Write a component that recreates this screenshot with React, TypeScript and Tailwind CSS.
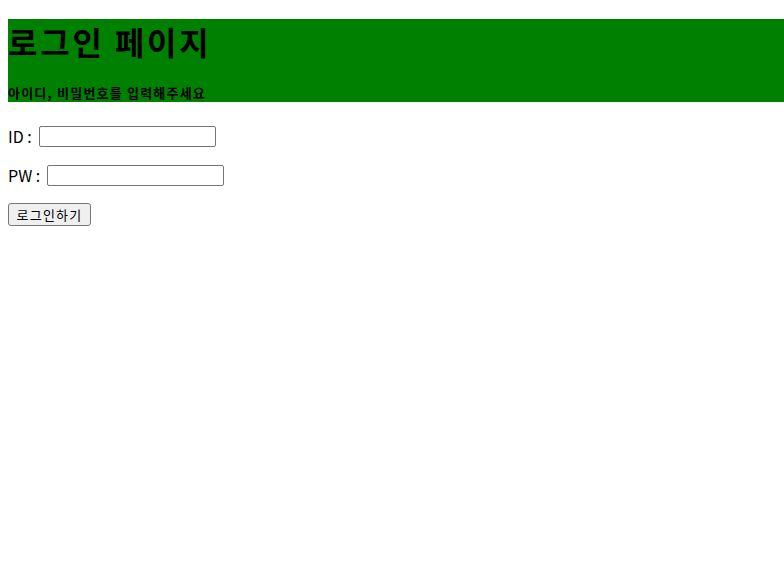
import React from "react";

export default function App() {
  return (
    <div className="min-h-[575px] bg-white pl-2 pt-[19px] font-['Noto_Sans_CJK_KR','Noto_Sans',sans-serif] text-black">
      <div className="flex h-[83px] flex-col bg-[#008000]">
        <h1 className="h-[44px] text-[32px] font-bold leading-[44px] tracking-[2.8px]">로그인 페이지</h1>
        <h5 className="mt-[22px] text-[13px] font-semibold leading-[16px] tracking-[1.2px]">아이디, 비밀번호를 입력해주세요</h5>
      </div>
      <div className="mt-[24px] flex h-[21px] items-center">
        <span className="text-[16px] leading-[21px]">ID :</span>
        <input type="text" className="ml-[7px] h-[21px] w-[177px] rounded-[2px] border border-[#767676] bg-white px-[2px] text-[13px] outline-none" />
      </div>
      <div className="mt-[18px] flex h-[21px] items-center">
        <span className="text-[16px] leading-[21px]">PW :</span>
        <input type="password" className="ml-[7px] h-[21px] w-[177px] rounded-[2px] border border-[#767676] bg-white px-[2px] text-[13px] outline-none" />
      </div>
      <div className="mt-[17px]">
        <button type="button" className="flex h-[23px] w-[83px] items-center justify-center rounded-[3px] border border-[#767676] bg-[#efefef] text-[13px] leading-[21px] tracking-[1.2px]">
          로그인하기
        </button>
      </div>
    </div>
  );
}
